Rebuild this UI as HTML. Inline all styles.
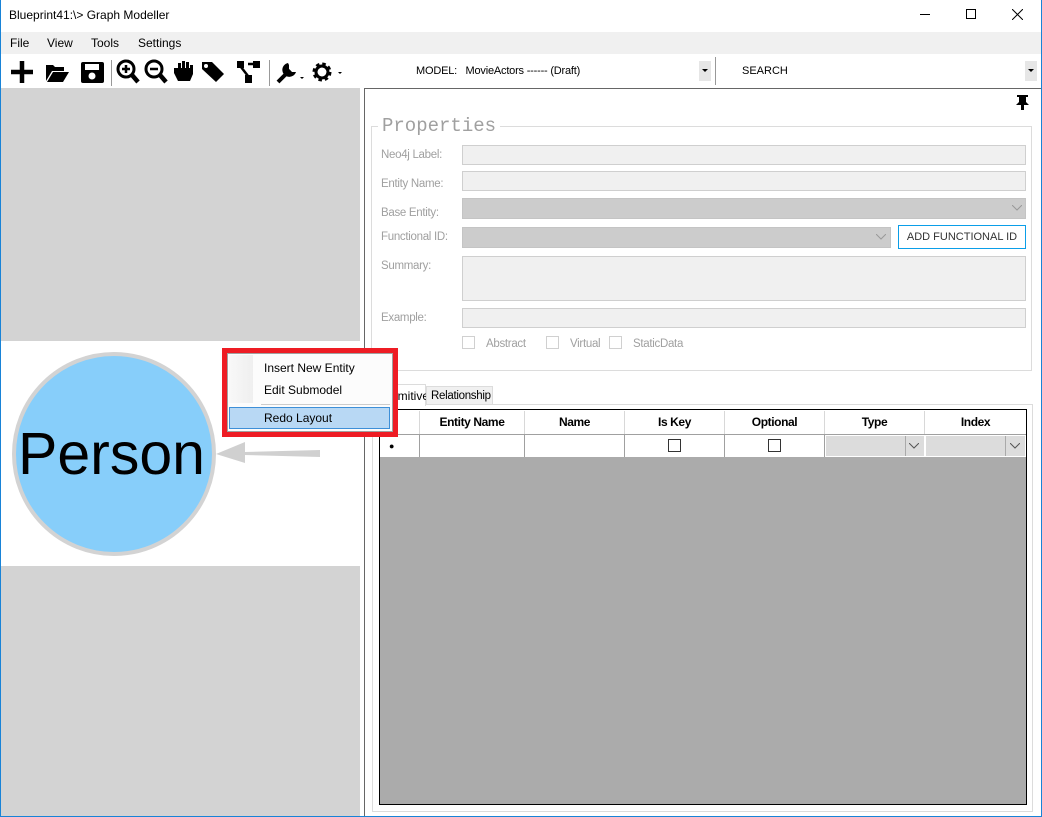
<!DOCTYPE html>
<html><head><meta charset="utf-8"><style>
*{margin:0;padding:0;box-sizing:border-box}
body{width:1042px;height:817px;position:relative;overflow:hidden;background:#fff;font-family:"Liberation Sans",sans-serif;font-size:12px;color:#000}
.a{position:absolute}
.lbl{position:absolute;left:381px;color:#a0a0a0;font-size:11.5px;letter-spacing:-0.3px}
.inp{position:absolute;left:462px;width:564px;height:20px;background:#f0f0f0;border:1px solid #cfcfcf}
.dis{background:#cccccc;border:1px solid #c4c4c4}
.cb{position:absolute;width:13px;height:13px;border:1px solid #d0d0d0;background:#fff}
.th{position:absolute;top:411px;height:23px;border-right:1px solid #d8d8d8;font-weight:bold;text-align:center;line-height:23px;font-size:12px;letter-spacing:-0.4px}
.td{position:absolute;top:435px;height:22px;background:#fff;border-right:1px solid #a0a0a0}
.chk{position:absolute;width:13px;height:13px;border:1px solid #333;background:#fff}
</style></head><body>
<div class="a" style="left:0;top:0;width:1042px;height:817px;border:1px solid #1883d7;border-top:none"></div>
<!-- title -->
<div class="a" style="left:9px;top:8px;font-size:12px">Blueprint41:\&gt; Graph Modeller</div>
<div class="a" style="left:920px;top:14px;width:10px;height:1px;background:#000"></div>
<div class="a" style="left:966px;top:9px;width:10px;height:10px;border:1px solid #000"></div>
<svg class="a" style="left:1012px;top:9px" width="11" height="11"><path d="M0 0L11 11M11 0L0 11" stroke="#000" stroke-width="1"/></svg>
<!-- menu -->
<div class="a" style="left:1px;top:32px;width:1040px;height:22px;background:#f0f0f0"></div>
<div class="a" style="left:10px;top:36px">File</div>
<div class="a" style="left:47px;top:36px">View</div>
<div class="a" style="left:91px;top:36px">Tools</div>
<div class="a" style="left:138px;top:36px">Settings</div>
<!-- toolbar -->
<svg class="a" style="left:8px;top:58px" width="340" height="28">
<path d="M14 3V25M3 14H25" stroke="#000" stroke-width="4.5"/>
<path d="M38 7h7l2 2h9v4H44l-6 10z M39 24l6-10h16l-6 10z" fill="#000"/>
<rect x="73" y="4" width="23" height="21" rx="2" fill="#000"/><rect x="77" y="6" width="14" height="6" fill="#fff"/><circle cx="84" cy="18" r="3.5" fill="#fff"/>
<rect x="103" y="2" width="1" height="26" fill="#999"/>
<circle cx="118" cy="11" r="8" stroke="#000" stroke-width="3" fill="none"/><path d="M124 17l6 7" stroke="#000" stroke-width="4.5"/><path d="M118 7v8M114 11h8" stroke="#000" stroke-width="2.5"/>
<circle cx="146" cy="11" r="8" stroke="#000" stroke-width="3" fill="none"/><path d="M152 17l6 7" stroke="#000" stroke-width="4.5"/><path d="M142 11h8" stroke="#000" stroke-width="2.5"/>
<path d="M166 10h4V5h3v5h1V3h3v7h1V4h3v6h1V7h3v9l-3 7h-12l-4-8z" fill="#000"/>
<path d="M194 4h10l12 12-8 8-14-13z" fill="#000"/><circle cx="198" cy="8" r="2" fill="#fff"/>
<rect x="229" y="3" width="7" height="7" fill="#000"/><rect x="245" y="3" width="7" height="7" fill="#000"/><rect x="237" y="17" width="7" height="8" fill="#000"/><path d="M233 9l7 9M240 6h6" stroke="#000" stroke-width="2.5"/>
<rect x="261" y="2" width="1" height="26" fill="#999"/>
<path d="M270 24l12-12" stroke="#000" stroke-width="4"/><path d="M280 5a7 7 0 1 0 8 9l-4 0-3-3 0-4z" fill="#000"/>
<path d="M292 19l2 2 2-2z" fill="#000"/>
<circle cx="314" cy="14" r="7" stroke="#000" stroke-width="5" stroke-dasharray="3 2.5" fill="none"/><circle cx="314" cy="14" r="6" stroke="#000" stroke-width="3" fill="none"/>
<path d="M330 14l2 2 2-2z" fill="#000"/>
</svg>
<div class="a" style="left:416px;top:65px;font-size:11px;letter-spacing:-0.2px">MODEL:&nbsp;&nbsp; MovieActors ------ (Draft)</div>
<div class="a" style="left:699px;top:61px;width:12px;height:20px;background:#e6e6e6"></div>
<svg class="a" style="left:702px;top:69px" width="6" height="4"><path d="M0 0h6L3 3z" fill="#000"/></svg>
<div class="a" style="left:715px;top:57px;width:1px;height:28px;background:#999"></div>
<div class="a" style="left:742px;top:65px;font-size:11px">SEARCH</div>
<div class="a" style="left:1025px;top:61px;width:12px;height:20px;background:#e6e6e6"></div>
<svg class="a" style="left:1028px;top:69px" width="6" height="4"><path d="M0 0h6L3 3z" fill="#000"/></svg>
<!-- left panel -->
<div class="a" style="left:1px;top:88px;width:359px;height:253px;background:#d3d3d3"></div>
<div class="a" style="left:1px;top:566px;width:359px;height:250px;background:#d3d3d3"></div>
<div class="a" style="left:12px;top:352px;width:204px;height:204px;border-radius:50%;background:#87cefa;border:4px solid #d3d3d3"></div>
<div class="a" style="left:18px;top:419px;font-size:59px;line-height:70px">Person</div>
<svg class="a" style="left:214px;top:438px" width="110" height="30"><path d="M2 16L31 4V25z" fill="#d0d0d0"/><path d="M30 14L106 12V19L30 17z" fill="#d0d0d0"/></svg>
<!-- right panel -->
<div class="a" style="left:364px;top:88px;width:677px;height:728px;border-left:1px solid #666;border-top:1px solid #666"></div>
<svg class="a" style="left:1015px;top:95px" width="15" height="15"><path d="M2 0h11v2h-2v5l3 3H9v5H6v-5H1l3-3V2H2z" fill="#000"/></svg>
<div class="a" style="left:371px;top:126px;width:661px;height:245px;border:1px solid #dcdcdc"></div>
<div class="a" style="left:378px;top:115px;background:#fff;padding:0 4px;font-family:'Liberation Mono',monospace;font-size:19px;color:#a0a0a0">Properties</div>
<div class="lbl" style="top:149px">Neo4j Label:</div><div class="inp" style="top:145px"></div>
<div class="lbl" style="top:178px">Entity Name:</div><div class="inp" style="top:171px"></div>
<div class="lbl" style="top:207px">Base Entity:</div><div class="inp dis" style="top:198px;height:21px"></div>
<svg class="a" style="left:1012px;top:205px" width="10" height="6"><path d="M0 0l5 5 5-5" stroke="#999" fill="none"/></svg>
<div class="lbl" style="top:231px">Functional ID:</div><div class="inp dis" style="top:227px;width:429px;height:21px"></div>
<svg class="a" style="left:876px;top:234px" width="10" height="6"><path d="M0 0l5 5 5-5" stroke="#999" fill="none"/></svg>
<div class="a" style="left:898px;top:225px;width:128px;height:24px;border:1px solid #0b9ee8;color:#333;font-size:11px;text-align:center;line-height:22px">ADD FUNCTIONAL ID</div>
<div class="lbl" style="top:260px">Summary:</div><div class="inp" style="top:256px;height:45px"></div>
<div class="lbl" style="top:312px">Example:</div><div class="inp" style="top:308px"></div>
<div class="cb" style="left:462px;top:336px"></div><div class="lbl" style="left:486px;top:338px">Abstract</div>
<div class="cb" style="left:546px;top:336px"></div><div class="lbl" style="left:570px;top:338px">Virtual</div>
<div class="cb" style="left:609px;top:336px"></div><div class="lbl" style="left:633px;top:338px">StaticData</div>
<!-- tabs -->
<div class="a" style="left:372px;top:404px;width:661px;height:408px;border:1px solid #dcdcdc"></div>
<div class="a" style="left:374px;top:384px;width:52px;height:22px;background:#fff;border:1px solid #dcdcdc;border-bottom:none;padding:4px 0 0 8px">Primitive</div>
<div class="a" style="left:426px;top:386px;width:67px;height:19px;background:#f0f0f0;border:1px solid #dcdcdc;padding:3px 0 0 4px;font-size:11.5px;letter-spacing:-0.3px">Relationship</div>
<div class="a" style="left:379px;top:409px;width:648px;height:396px;background:#ababab;border:1px solid #000"></div>
<div class="a" style="left:380px;top:410px;width:646px;height:25px;background:#fff;border-bottom:1px solid #a0a0a0"></div>
<div class="th" style="left:380px;width:40px"></div>
<div class="th" style="left:420px;width:105px">Entity Name</div>
<div class="th" style="left:525px;width:100px">Name</div>
<div class="th" style="left:625px;width:100px">Is Key</div>
<div class="th" style="left:725px;width:100px">Optional</div>
<div class="th" style="left:825px;width:100px">Type</div>
<div class="th" style="left:925px;width:101px;border:none">Index</div>
<div class="td" style="left:380px;width:40px;font-size:9px;padding:6px 0 0 9px">&#9679;</div>
<div class="td" style="left:420px;width:105px"></div>
<div class="td" style="left:525px;width:100px"></div>
<div class="td" style="left:625px;width:100px"><div class="chk" style="left:43px;top:4px"></div></div>
<div class="td" style="left:725px;width:100px"><div class="chk" style="left:43px;top:4px"></div></div>
<div class="td" style="left:825px;width:100px;background:#dcdcdc;border:1px solid #fff"></div>
<div class="td" style="left:925px;width:101px;background:#dcdcdc;border:1px solid #fff"></div>
<div class="a" style="left:905px;top:436px;width:1px;height:20px;background:#aaa"></div>
<div class="a" style="left:1005px;top:436px;width:1px;height:20px;background:#aaa"></div>
<svg class="a" style="left:909px;top:443px" width="10" height="6"><path d="M0 0l5 5 5-5" stroke="#555" fill="none"/></svg>
<svg class="a" style="left:1010px;top:443px" width="10" height="6"><path d="M0 0l5 5 5-5" stroke="#555" fill="none"/></svg>
<!-- context menu -->
<div class="a" style="left:222px;top:348px;width:176px;height:89px;border:5px solid #ee1c24;background:#fff"></div>
<div class="a" style="left:227px;top:353px;width:166px;height:79px;border:1px solid #a0a0a0;background:#fcfcfc"></div>
<div class="a" style="left:229px;top:355px;width:24px;height:48px;background:linear-gradient(90deg,#f8f8f8,#efefef)"></div>
<div class="a" style="left:264px;top:361px">Insert New Entity</div>
<div class="a" style="left:264px;top:383px">Edit Submodel</div>
<div class="a" style="left:261px;top:404px;width:129px;height:1px;background:#ccc"></div>
<div class="a" style="left:229px;top:407px;width:161px;height:22px;background:#b8d8f4;border:1px solid #3d8fd8"></div>
<div class="a" style="left:264px;top:411px">Redo Layout</div>
</body></html>
